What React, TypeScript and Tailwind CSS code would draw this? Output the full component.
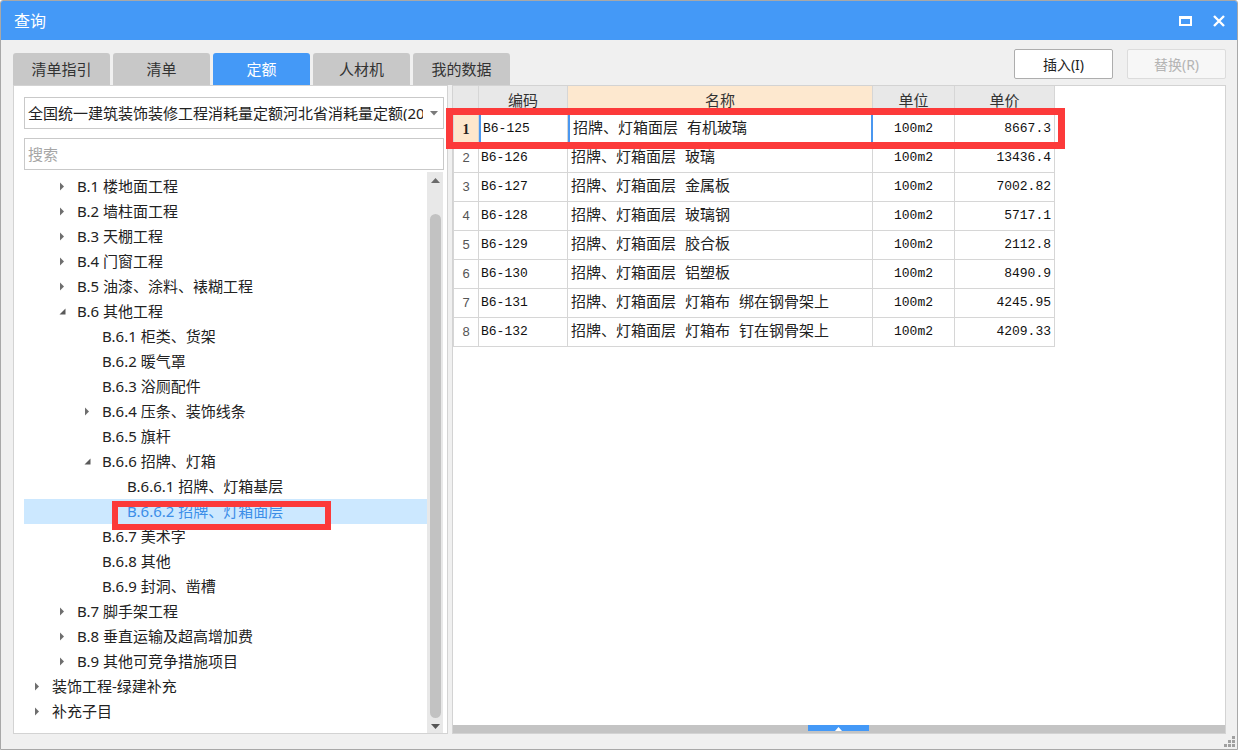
import React from "react";

type Node = { label: string; level: number; arrow?: "right" | "down"; selected?: boolean };

const tree: Node[] = [
  { label: "B.1 楼地面工程", level: 1, arrow: "right" },
  { label: "B.2 墙柱面工程", level: 1, arrow: "right" },
  { label: "B.3 天棚工程", level: 1, arrow: "right" },
  { label: "B.4 门窗工程", level: 1, arrow: "right" },
  { label: "B.5 油漆、涂料、裱糊工程", level: 1, arrow: "right" },
  { label: "B.6 其他工程", level: 1, arrow: "down" },
  { label: "B.6.1 柜类、货架", level: 2 },
  { label: "B.6.2 暖气罩", level: 2 },
  { label: "B.6.3 浴厕配件", level: 2 },
  { label: "B.6.4 压条、装饰线条", level: 2, arrow: "right" },
  { label: "B.6.5 旗杆", level: 2 },
  { label: "B.6.6 招牌、灯箱", level: 2, arrow: "down" },
  { label: "B.6.6.1 招牌、灯箱基层", level: 3 },
  { label: "B.6.6.2 招牌、灯箱面层", level: 3, selected: true },
  { label: "B.6.7 美术字", level: 2 },
  { label: "B.6.8 其他", level: 2 },
  { label: "B.6.9 封洞、凿槽", level: 2 },
  { label: "B.7 脚手架工程", level: 1, arrow: "right" },
  { label: "B.8 垂直运输及超高增加费", level: 1, arrow: "right" },
  { label: "B.9 其他可竞争措施项目", level: 1, arrow: "right" },
  { label: "装饰工程-绿建补充", level: 0, arrow: "right" },
  { label: "补充子目", level: 0, arrow: "right" },
];

const indent = ["pl-[8px]", "pl-[33px]", "pl-[58px]", "pl-[83px]"];

const rows = [
  ["B6-125", "招牌、灯箱面层 有机玻璃", "100m2", "8667.3"],
  ["B6-126", "招牌、灯箱面层 玻璃", "100m2", "13436.4"],
  ["B6-127", "招牌、灯箱面层 金属板", "100m2", "7002.82"],
  ["B6-128", "招牌、灯箱面层 玻璃钢", "100m2", "5717.1"],
  ["B6-129", "招牌、灯箱面层 胶合板", "100m2", "2112.8"],
  ["B6-130", "招牌、灯箱面层 铝塑板", "100m2", "8490.9"],
  ["B6-131", "招牌、灯箱面层 灯箱布 绑在钢骨架上", "100m2", "4245.95"],
  ["B6-132", "招牌、灯箱面层 灯箱布 钉在钢骨架上", "100m2", "4209.33"],
];

const tabs = ["清单指引", "清单", "定额", "人材机", "我的数据"];

function Arrow({ dir }: { dir?: "right" | "down" }) {
  if (dir === "right")
    return (
      <svg width="6" height="9" viewBox="0 0 6 9">
        <path d="M1 0.5 L5 4.5 L1 8.5 Z" fill="#6e6e6e" />
      </svg>
    );
  if (dir === "down")
    return (
      <svg width="7" height="7" viewBox="0 0 7 7">
        <path d="M6.5 0.5 L6.5 6.5 L0.5 6.5 Z" fill="#5a5a5a" />
      </svg>
    );
  return null;
}

export default function App() {
  return (
    <div className="relative w-[1238px] h-[750px] overflow-hidden bg-[#f0f0f0] border border-[#a8a8a8] rounded-t-[3px] font-['Noto_Sans','Noto_Sans_CJK_SC',sans-serif] text-[#222]">
      {/* title bar */}
      <div className="h-[39px] bg-[#4499f7] flex items-center pl-[13px] pr-[12px]">
        <span className="text-white text-[16px] leading-none">查询</span>
        <div className="ml-auto flex items-center gap-[21px]">
          <div className="w-[13px] h-[10px] border-2 border-t-[3px] border-white" />
          <svg width="12" height="12" viewBox="0 0 12 12">
            <path d="M1 1 L11 11 M11 1 L1 11" stroke="#fff" strokeWidth="2.4" />
          </svg>
        </div>
      </div>

      <div className="pl-[12px] pr-[11px]">
        {/* tabs + buttons */}
        <div className="h-[45px] flex justify-between">
          <div className="flex gap-[3px] self-end">
            {tabs.map((t) => (
              <div
                key={t}
                className={
                  t === "定额"
                    ? "w-[97px] h-[32px] rounded-t-[3px] flex items-center justify-center text-[15px] bg-[#4499f7] text-white"
                    : "w-[97px] h-[32px] rounded-t-[3px] flex items-center justify-center text-[15px] bg-[#c8c8c8] text-[#333]"
                }
              >
                {t}
              </div>
            ))}
          </div>
          <div className="flex gap-[14px] mt-[9px]">
            <div className="w-[99px] h-[30px] bg-white border border-[#adadad] rounded-[2px] flex items-center justify-center text-[14px] text-[#222]">
              插入(I)
            </div>
            <div className="w-[99px] h-[30px] bg-[#f7f7f7] border border-[#dcdcdc] rounded-[2px] flex items-center justify-center text-[14px] text-[#b4b4b4]">
              替换(R)
            </div>
          </div>
        </div>

        {/* panels */}
        <div className="h-[649px] flex gap-[4px]">
          {/* left panel */}
          <div className="w-[435px] bg-white border border-[#d3d3d3] flex flex-col">
            <div className="pl-[10px] pt-[11px]">
              <div className="w-[420px] h-[32px] border border-[#c9c9c9] flex items-center">
                <span className="w-[398px] pl-[3px] overflow-hidden whitespace-nowrap text-[15px] leading-none">
                  全国统一建筑装饰装修工程消耗量定额河北省消耗量定额(20
                </span>
                <svg className="ml-[7px]" width="8" height="5" viewBox="0 0 8 5">
                  <path d="M0 0 L8 0 L4 4.5 Z" fill="#7a7a7a" />
                </svg>
              </div>
              <div className="mt-[9px] w-[420px] h-[32px] border border-[#c9c9c9] flex items-center pl-[3px] text-[15px] text-[#a6a6a6]">
                搜索
              </div>
            </div>
            <div className="flex-1 flex mt-[2px]">
              <div className="ml-[10px] w-[403px] pt-[2px]">
                {tree.map((n) => (
                  <div
                    key={n.label}
                    className={`h-[25px] flex items-center ${indent[n.level]} ${
                      n.selected ? "bg-[#cce8ff] text-[#3c8ee8]" : ""
                    }`}
                  >
                    <div className="w-[20px] flex items-center pl-[2px]">
                      <Arrow dir={n.arrow} />
                    </div>
                    <span className="text-[15px] leading-none whitespace-nowrap">{n.label}</span>
                  </div>
                ))}
              </div>
              {/* vertical scrollbar */}
              <div className="w-[16px] bg-[#e8e8e8] flex flex-col items-center">
                <svg className="mt-[6px]" width="9" height="5" viewBox="0 0 9 5">
                  <path d="M0 5 L9 5 L4.5 0 Z" fill="#6a6a6a" />
                </svg>
                <div className="mt-[31px] w-[11px] h-[504px] bg-[#c2c2c2] rounded-[6px]" />
                <svg className="mt-[6px]" width="9" height="5" viewBox="0 0 9 5">
                  <path d="M0 0 L9 0 L4.5 5 Z" fill="#555" />
                </svg>
              </div>
            </div>
          </div>

          {/* right panel */}
          <div className="flex-1 bg-white border border-[#d3d3d3] flex flex-col">
            <div className="flex-1">
              <div className="grid grid-cols-[26px_89px_305px_82px_100px] w-[602px]">
                {/* header */}
                <div className="h-[29px] bg-[#e8e8e8] border-r border-b border-[#d6d6d6]" />
                <div className="h-[29px] bg-[#e8e8e8] border-r border-b border-[#d6d6d6] flex items-center justify-center text-[15px] text-[#333]">编码</div>
                <div className="h-[29px] bg-[#fde8cf] border-r border-b border-[#d6d6d6] flex items-center justify-center text-[15px] text-[#333]">名称</div>
                <div className="h-[29px] bg-[#e8e8e8] border-r border-b border-[#d6d6d6] flex items-center justify-center text-[15px] text-[#333]">单位</div>
                <div className="h-[29px] bg-[#e8e8e8] border-r border-b border-[#d6d6d6] flex items-center justify-center text-[15px] text-[#333]">单价</div>

                {rows.map((r, i) => (
                  <React.Fragment key={r[0]}>
                    <div
                      className={
                        i === 0
                          ? "h-[29px] bg-[#fde6cc] border-l border-r border-b border-[#d6d6d6] flex items-center justify-center font-['Liberation_Serif',serif] font-bold text-[14px]"
                          : "h-[29px] border-l border-r border-b border-[#d6d6d6] flex items-center justify-center font-['Liberation_Sans',sans-serif] text-[13px] text-[#555]"
                      }
                    >
                      {i + 1}
                    </div>
                    <div
                      className={`h-[29px] border-r border-b border-[#d6d6d6] flex items-center pl-[2px] font-['Liberation_Mono',monospace] text-[13px] text-[#111] ${
                        i === 0 ? "border-l-2 border-l-[#4a97f0]" : ""
                      }`}
                    >
                      {r[0]}
                    </div>
                    <div
                      className={`h-[29px] border-b flex items-center pl-[3px] text-[15px] leading-none whitespace-nowrap font-['Liberation_Mono','Noto_Sans_CJK_SC',monospace] ${
                        i === 0
                          ? "border-l-2 border-r-2 border-l-[#4a97f0] border-r-[#4a97f0] border-b-[#d6d6d6]"
                          : "border-r border-[#d6d6d6]"
                      }`}
                    >
                      {r[1]}
                    </div>
                    <div className="h-[29px] border-r border-b border-[#d6d6d6] flex items-center justify-center font-['Liberation_Mono',monospace] text-[13px] text-[#111]">
                      {r[2]}
                    </div>
                    <div className="h-[29px] border-r border-b border-[#d6d6d6] flex items-center justify-end pr-[3px] font-['Liberation_Mono',monospace] text-[13px] text-[#111]">
                      {r[3]}
                    </div>
                  </React.Fragment>
                ))}
              </div>
            </div>
            {/* horizontal scrollbar */}
            <div className="h-[8px] bg-[#c4c4c4] flex">
              <div className="ml-[355px] w-[61px] h-[6px] bg-[#4499f7] flex items-end justify-center">
                <svg width="7" height="4" viewBox="0 0 7 4">
                  <path d="M0 4 L7 4 L3.5 0 Z" fill="#fff" />
                </svg>
              </div>
            </div>
          </div>
        </div>
      </div>

      {/* resize grip */}
      <div className="absolute right-[2px] bottom-[2px] grid grid-cols-3 gap-[1px] w-[11px]">
        <span />
        <span />
        <span className="w-[3px] h-[3px] bg-[#a0a0a0]" />
        <span />
        <span className="w-[3px] h-[3px] bg-[#a0a0a0]" />
        <span className="w-[3px] h-[3px] bg-[#a0a0a0]" />
        <span className="w-[3px] h-[3px] bg-[#a0a0a0]" />
        <span className="w-[3px] h-[3px] bg-[#a0a0a0]" />
        <span className="w-[3px] h-[3px] bg-[#a0a0a0]" />
      </div>

      {/* red annotation boxes */}
      <div className="absolute left-[445px] top-[107px] w-[619px] h-[41px] border-[7px] border-[#fc3a3a]" />
      <div className="absolute left-[111px] top-[500px] w-[219px] h-[29px] border-[6px] border-[#fc3a3a]" />
    </div>
  );
}
